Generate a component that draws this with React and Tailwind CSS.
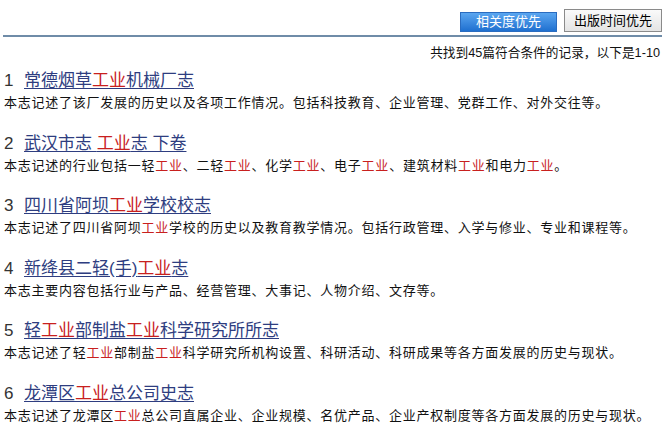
const items = [
  {
    title: ["常德烟草", "*工业", "机械厂志"],
    desc: ["本志记述了该厂发展的历史以及各项工作情况。包括科技教育、企业管理、党群工作、对外交往等。"],
  },
  {
    title: ["武汉市志 ", "*工业", "志 下卷"],
    desc: ["本志记述的行业包括一轻", "*工业", "、二轻", "*工业", "、化学", "*工业", "、电子", "*工业", "、建筑材料", "*工业", "和电力", "*工业", "。"],
  },
  {
    title: ["四川省阿坝", "*工业", "学校校志"],
    desc: ["本志记述了四川省阿坝", "*工业", "学校的历史以及教育教学情况。包括行政管理、入学与修业、专业和课程等。"],
  },
  {
    title: ["新绛县二轻(手)", "*工业", "志"],
    desc: ["本志主要内容包括行业与产品、经营管理、大事记、人物介绍、文存等。"],
  },
  {
    title: ["轻", "*工业", "部制盐", "*工业", "科学研究所所志"],
    desc: ["本志记述了轻", "*工业", "部制盐", "*工业", "科学研究所机构设置、科研活动、科研成果等各方面发展的历史与现状。"],
  },
  {
    title: ["龙潭区", "*工业", "总公司史志"],
    desc: ["本志记述了龙潭区", "*工业", "总公司直属企业、企业规模、名优产品、企业产权制度等各方面发展的历史与现状。"],
  },
];

function Parts({ parts }) {
  return parts.map((p, i) =>
    p.startsWith("*") ? (
      <span key={i} className="text-[#c8201e]">
        {p.slice(1)}
      </span>
    ) : (
      <span key={i}>{p}</span>
    )
  );
}

export default function App() {
  return (
    <div
      className="w-[672px] h-[430px] overflow-hidden bg-white text-black"
      style={{ fontFamily: '"Liberation Sans", "Noto Sans CJK SC", sans-serif' }}
    >
      <div className="flex justify-end items-end gap-[7px] pr-[10px] pt-[9px]">
        <button className="w-[97px] h-[20px] border border-[#2a6cc0] bg-gradient-to-b from-[#5aa6f0] to-[#1e70d0] text-white text-[13px] leading-[18px]">
          相关度优先
        </button>
        <button className="w-[98px] h-[23px] border border-[#8a8a8a] bg-gradient-to-b from-[#fafafa] to-[#e4e4e4] text-black text-[13px] leading-[20px]">
          出版时间优先
        </button>
      </div>
      <div className="ml-[3px] mr-[10px] mt-[3px] h-[2px] bg-[#6f8ca8]" />
      <div className="mt-[8px] pr-[12px] text-right text-[12.7px] leading-[16px] text-[#111]">
        共找到45篇符合条件的记录，以下是1-10
      </div>
      <div className="mt-[10px] flex flex-col gap-[21.5px]">
        {items.map((it, i) => (
          <div key={i} className="pl-[4px]">
            <div className="flex text-[17px] leading-[20px]">
              <span className="w-[20px] text-[#333]">{i + 1}</span>
              <span className="underline underline-offset-[2px] text-[#2e3d80] decoration-[#2e3d80]">
                <Parts parts={it.title} />
              </span>
            </div>
            <div className="mt-[3px] text-[13px] tracking-[0.75px] leading-[18px] text-[#111] whitespace-nowrap">
              <Parts parts={it.desc} />
            </div>
          </div>
        ))}
      </div>
    </div>
  );
}
